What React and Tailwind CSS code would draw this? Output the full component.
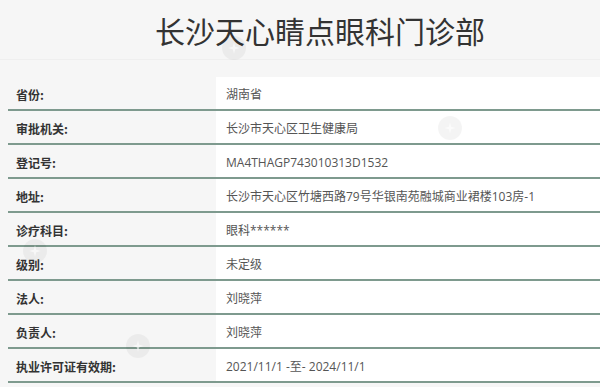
import React from 'react';

const rows = [
  { label: '省份:', value: '湖南省' },
  { label: '审批机关:', value: '长沙市天心区卫生健康局' },
  { label: '登记号:', value: 'MA4THAGP743010313D1532' },
  { label: '地址:', value: '长沙市天心区竹塘西路79号华银南苑融城商业裙楼103房-1' },
  { label: '诊疗科目:', value: '眼科******' },
  { label: '级别:', value: '未定级' },
  { label: '法人:', value: '刘晓萍' },
  { label: '负责人:', value: '刘晓萍' },
  { label: '执业许可证有效期:', value: '2021/11/1 -至- 2024/11/1' },
];

// faint watermark badges sitting over the table
const marks = [
  { x: 222, y: 36 },
  { x: 438, y: 116 },
  { x: 23, y: 239 },
  { x: 126, y: 334 },
];

function Mark({ x, y }) {
  return (
    <div className="absolute pointer-events-none" style={{ left: x, top: y }}>
      <svg width="24" height="24" viewBox="0 0 24 24">
        <circle cx="12" cy="12" r="12" fill="#000" opacity="0.045" />
        <path d="M12 6 L13.2 10.8 L18 12 L13.2 13.2 L12 18 L10.8 13.2 L6 12 L10.8 10.8 Z" fill="#fff" opacity="0.6" />
      </svg>
    </div>
  );
}

export default function App() {
  return (
    <div className="relative w-[600px] h-[387px] overflow-hidden bg-[#f6f6f6] font-['Noto_Sans_CJK_SC','Noto_Sans',sans-serif]">
      {/* TITLE */}
      <div className="h-[60px] border-b border-[#efefef] flex items-center justify-center pl-[40px]">
        <h1 className="text-[30px] leading-none text-[#333] font-normal">长沙天心睛点眼科门诊部</h1>
      </div>

      {/* INFO TABLE */}
      <div className="ml-[8px] mt-[17px]">
        {rows.map((row) => (
          <div key={row.label} className="flex h-[34px] border-b-2 border-[#7e9a8e]">
            <div className="w-[208px] flex items-center pl-[8px] pt-[3px] text-[12px] font-bold text-[#333]">
              {row.label}
            </div>
            <div className="flex-1 bg-white flex items-center pl-[10px] pt-[3px] text-[12px] text-[#555] font-['Open_Sans','Noto_Sans_CJK_SC',sans-serif]">
              {row.value}
            </div>
          </div>
        ))}
      </div>

      {marks.map((m, i) => (
        <Mark key={i} x={m.x} y={m.y} />
      ))}
    </div>
  );
}
